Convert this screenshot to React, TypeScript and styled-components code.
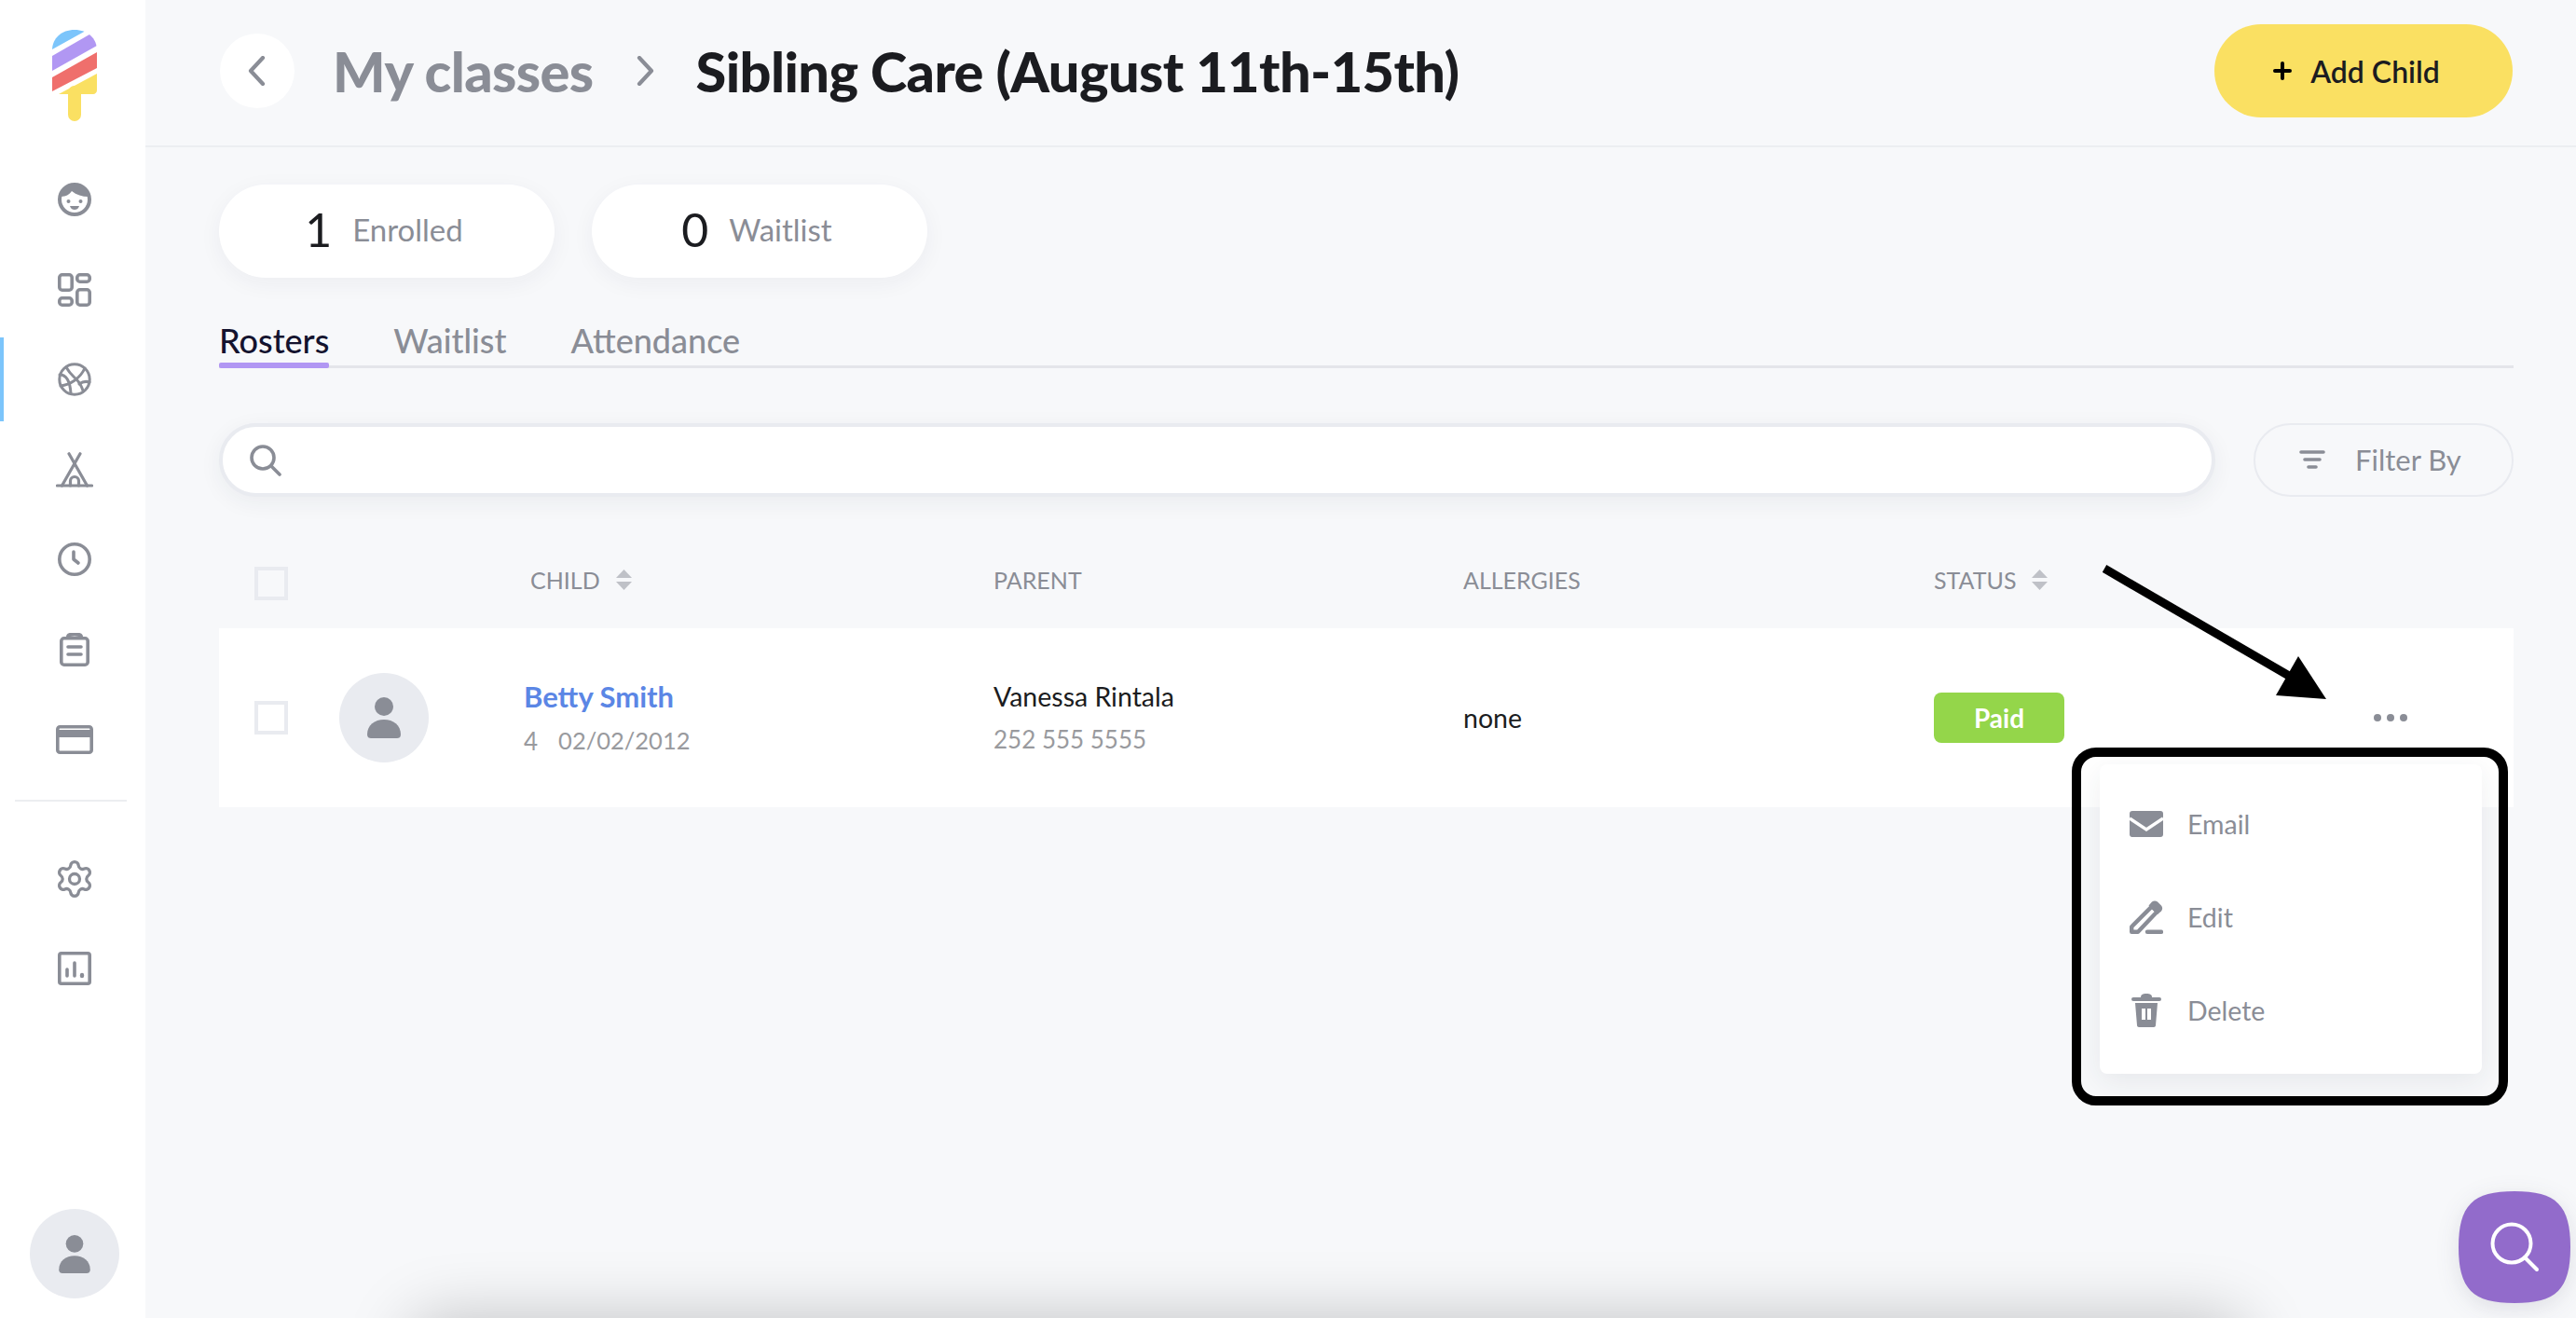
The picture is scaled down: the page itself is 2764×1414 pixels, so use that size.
import styled, { createGlobalStyle } from "styled-components";
import { Settings } from "lucide-react";

const GlobalStyle = createGlobalStyle`
  html, body {
    margin: 0;
    padding: 0;
    height: 100%;
    overflow: hidden;
    background: #f7f8fa;
    font-family: "Lato", "Noto Sans", sans-serif;
  }
`;

const grey = "#8a8d96";

const Page = styled.div`
  position: relative;
  display: flex;
  width: 2764px;
  height: 1414px;
  overflow: hidden;
  background: #f7f8fa;
`;

const Sidebar = styled.nav`
  width: 156px;
  flex-shrink: 0;
  display: flex;
  flex-direction: column;
  align-items: center;
  background: #fff;
  padding-top: 32px;
  box-sizing: border-box;
`;

const Logo = styled.svg`
  width: 48px;
  height: 98px;
  margin: 0 0 36px 4px;
`;

const NavItem = styled.div<{ $active?: boolean }>`
  position: relative;
  align-self: stretch;
  height: 96.5px;
  display: flex;
  align-items: center;
  justify-content: center;
  box-sizing: border-box;
  padding-left: 4px;
  color: ${grey};
  &::before {
    content: "";
    display: ${(p) => (p.$active ? "block" : "none")};
    position: absolute;
    left: 0;
    top: 3px;
    width: 4px;
    height: 90px;
    background: #7cc5fb;
  }
`;

const NavDivider = styled.div`
  width: 120px;
  height: 2px;
  background: #eceef1;
  margin: 16px 4px 35px 0;
  flex-shrink: 0;
`;

const UserBubble = styled.div`
  width: 96px;
  height: 96px;
  border-radius: 50%;
  background: #e9ebf0;
  display: flex;
  align-items: center;
  justify-content: center;
  margin: auto 0 21px 4px;
`;

const Main = styled.main`
  flex: 1;
  display: flex;
  flex-direction: column;
  min-width: 0;
`;

const Header = styled.header`
  height: 158px;
  box-sizing: border-box;
  display: flex;
  align-items: center;
  padding: 0 68px 4px 80px;
  border-bottom: 2px solid #eceef1;
`;

const BackButton = styled.div`
  width: 80px;
  height: 80px;
  border-radius: 50%;
  background: #fff;
  display: flex;
  align-items: center;
  justify-content: center;
  margin-right: 41px;
`;

const Crumb = styled.div`
  font-size: 59.5px;
  font-weight: 900;
  letter-spacing: -0.6px;
  color: ${grey};
`;

const CrumbArrow = styled.svg`
  width: 20px;
  height: 32px;
  margin: 0 45px;
`;

const Title = styled(Crumb)`
  color: #1b1c20;
`;

const AddButton = styled.button`
  margin-left: auto;
  width: 320px;
  height: 100px;
  border: none;
  border-radius: 50px;
  background: #fae062;
  display: flex;
  align-items: center;
  justify-content: center;
  gap: 20px;
  padding: 0 15px 0 0;
  font-family: inherit;
  font-size: 32px;
  font-weight: 600;
  color: #1b1c20;
`;

const Content = styled.div`
  padding: 40px 67px 0 79px;
  display: flex;
  flex-direction: column;
`;

const Pills = styled.div`
  display: flex;
  gap: 40px;
`;

const Pill = styled.div`
  width: 360px;
  height: 100px;
  padding: 0 6px 4px 0;
  box-sizing: border-box;
  border-radius: 50px;
  background: #fff;
  box-shadow: 0 6px 24px rgba(40, 45, 70, 0.05);
  display: flex;
  align-items: center;
  justify-content: center;
  gap: 22px;
  font-size: 33px;
  color: ${grey};
`;

const PillCount = styled.span`
  font-size: 50px;
  color: #1b1c20;
`;

const Tabs = styled.div`
  display: flex;
  gap: 69px;
  margin-top: 32px;
  border-bottom: 3px solid #e4e5ea;
  height: 62px;
`;

const Tab = styled.div<{ $active?: boolean }>`
  position: relative;
  font-size: 36px;
  font-weight: 500;
  line-height: 70px;
  color: ${(p) => (p.$active ? "#14132e" : grey)};
  &::after {
    content: "";
    display: ${(p) => (p.$active ? "block" : "none")};
    position: absolute;
    left: 0;
    right: 0;
    bottom: -3px;
    height: 6px;
    border-radius: 2px;
    background: #b197f3;
  }
`;

const SearchRow = styled.div`
  display: flex;
  gap: 41px;
  margin-top: 59px;
`;

const SearchBox = styled.div`
  flex: 1;
  height: 79px;
  box-sizing: border-box;
  border: 4px solid #e9ebf0;
  border-radius: 40px;
  background: #fff;
  box-shadow: 0 6px 24px rgba(40, 45, 70, 0.06);
  display: flex;
  align-items: center;
  padding-left: 28px;
`;

const FilterButton = styled.div`
  width: 279px;
  height: 79px;
  box-sizing: border-box;
  border: 2px solid #e9ebf0;
  border-radius: 40px;
  display: flex;
  align-items: center;
  padding: 0 0 2px 47px;
  gap: 32px;
  font-size: 31px;
  color: ${grey};
`;

const Table = styled.div`
  position: relative;
  margin-top: 45px;
`;

const columns = "91px 198px 504px 504px 505px 300px 1fr";

const HeadRow = styled.div`
  display: grid;
  grid-template-columns: ${columns};
  height: 96px;
  align-items: center;
  padding-left: 38px;
`;

const HeadCell = styled.div<{ $inset?: boolean }>`
  display: flex;
  align-items: center;
  gap: 17px;
  font-size: 25px;
  color: ${grey};
  padding: 0 0 9px ${(p) => (p.$inset ? 7 : 0)}px;
`;

const Checkbox = styled.div`
  width: 36px;
  height: 36px;
  box-sizing: border-box;
  border: 4px solid #e9ebf0;
  background: #fff;
`;

const HeadCheckbox = styled(Checkbox)`
  background: transparent;
`;

const Row = styled.div`
  display: grid;
  grid-template-columns: ${columns};
  height: 192px;
  align-items: center;
  padding-left: 38px;
  background: #fff;
`;

const Avatar = styled.div`
  width: 96px;
  height: 96px;
  border-radius: 50%;
  background: #e9ebf0;
  display: flex;
  align-items: center;
  justify-content: center;
`;

const Stack = styled.div`
  display: flex;
  flex-direction: column;
  gap: 13px;
  padding-bottom: 2px;
`;

const ChildName = styled.div`
  font-size: 31px;
  font-weight: 700;
  color: #5b86e5;
`;

const Muted = styled.div`
  font-size: 26px;
  color: #999a9e;
  display: flex;
  gap: 22px;
`;

const DateText = styled.span`
  font-size: 25.5px;
`;

const Plain = styled.div`
  font-size: 28.5px;
  color: #1b1c20;
`;

const Paid = styled.div`
  width: 140px;
  height: 54px;
  border-radius: 8px;
  background: #94d64a;
  color: #fff;
  font-size: 28px;
  font-weight: 700;
  display: flex;
  align-items: center;
  justify-content: center;
`;

const Dots = styled.div`
  display: flex;
  gap: 6px;
  justify-content: flex-end;
  padding-right: 114px;
`;

const Dot = styled.span`
  width: 8px;
  height: 8px;
  border-radius: 50%;
  background: ${grey};
`;

const ActionsMenu = styled.div`
  position: absolute;
  top: 242px;
  left: 2018px;
  width: 410px;
  height: 332px;
  box-sizing: border-box;
  padding: 14px 0;
  border-radius: 8px;
  background: #fff;
  box-shadow: 0 8px 30px rgba(40, 45, 70, 0.08);
  display: flex;
  flex-direction: column;
`;

const MenuItem = styled.div`
  height: 100px;
  display: flex;
  align-items: center;
  font-size: 28.5px;
  color: ${grey};
  padding-left: 32px;
  gap: 26px;
`;

const MenuIcon = styled.div`
  width: 36px;
  display: flex;
  justify-content: center;
`;

const Highlight = styled.div`
  position: absolute;
  top: 224px;
  left: 1988px;
  width: 468px;
  height: 384px;
  box-sizing: border-box;
  border: 10px solid #000;
  border-radius: 26px;
`;

const Arrow = styled.svg`
  position: absolute;
  top: 27px;
  left: 2021px;
  width: 242px;
  height: 148px;
`;

const HelpButton = styled.svg`
  position: absolute;
  left: 2638px;
  top: 1278px;
  width: 120px;
  height: 120px;
  filter: drop-shadow(0 6px 12px rgba(40, 45, 70, 0.12));
`;

const OffscreenBar = styled.div`
  position: absolute;
  top: 1424px;
  left: 450px;
  width: 1950px;
  height: 100px;
  border-radius: 20px;
  box-shadow: 0 0 70px 10px rgba(0, 0, 0, 0.22);
`;

const FaceIcon = () => (
  <svg width="36" height="36" viewBox="0 0 36 36">
    <circle cx="18" cy="18" r="16" fill="none" stroke="currentColor" strokeWidth="4" />
    <path d="M3 15C4 7 10 1 18 1s14 6 15 14c-7 0-13-2-18-6-2 3-6 6-12 6Z" fill="currentColor" />
    <circle cx="11.5" cy="20" r="2" fill="currentColor" />
    <circle cx="24.5" cy="20" r="2" fill="currentColor" />
    <path d="M13 25h10c-1 3-3 4-5 4s-4-1-5-4Z" fill="currentColor" />
  </svg>
);

const GridIcon = () => (
  <svg width="36" height="36" viewBox="0 0 36 36" fill="none" stroke="currentColor" strokeWidth="3.6">
    <rect x="1.8" y="1.8" width="13.4" height="16.4" rx="3" />
    <rect x="1.8" y="26.8" width="13.4" height="7.4" rx="3" />
    <rect x="20.8" y="1.8" width="13.4" height="7.4" rx="3" />
    <rect x="20.8" y="17.8" width="13.4" height="16.4" rx="3" />
  </svg>
);

const BallIcon = () => (
  <svg width="36" height="36" viewBox="0 0 36 36" fill="none" stroke="currentColor" strokeWidth="3" strokeLinecap="round">
    <circle cx="18" cy="18" r="16.2" />
    <path d="M3 25C13 24 24 17 29 6" />
    <path d="M9 5c4 7 7 9 11 13s6 9 7 12" />
    <path d="M2 13c6 0 11 5 12 20" />
    <path d="M34 21c-3-1-7-1-11 2" />
  </svg>
);

const TepeeIcon = () => (
  <svg width="40" height="38" viewBox="0 0 40 38" fill="none" stroke="currentColor" strokeWidth="3.2" strokeLinecap="round">
    <path d="M1.5 36h37" />
    <path d="M6.5 36 26 1.8" />
    <path d="M33.5 36 14 1.8" />
    <path d="M15.5 36v-5a4.5 4.5 0 0 1 9 0v5" />
  </svg>
);

const ClockIcon = () => (
  <svg width="36" height="36" viewBox="0 0 36 36" fill="none" stroke="currentColor" strokeWidth="3.6" strokeLinecap="round" strokeLinejoin="round">
    <circle cx="18" cy="18" r="16.2" />
    <path d="M17 10v8l5 4" />
  </svg>
);

const ClipboardIcon = () => (
  <svg width="32" height="36" viewBox="0 0 32 36" fill="none" stroke="currentColor" strokeWidth="3.6" strokeLinecap="round">
    <rect x="1.8" y="5.8" width="28.4" height="28.4" rx="3" />
    <path d="M9 4c0-2 2-2.4 7-2.4S23 2 23 4" strokeWidth="4" />
    <path d="M9 15h14M9 23h14" />
  </svg>
);

const CardIcon = () => (
  <svg width="40" height="31" viewBox="0 0 40 31" fill="none" stroke="currentColor" strokeWidth="3.6">
    <rect x="1.8" y="1.8" width="36.4" height="27.4" rx="2.5" />
    <rect x="1" y="5" width="38" height="8" fill="currentColor" stroke="none" />
  </svg>
);

const ChartIcon = () => (
  <svg width="36" height="36" viewBox="0 0 36 36" fill="none" stroke="currentColor" strokeWidth="3.6" strokeLinecap="round">
    <rect x="1.8" y="1.8" width="32.4" height="32.4" rx="2" />
    <path d="M10 19v7M18 12v14" />
    <path d="M26 25v1" strokeWidth="4.4" />
  </svg>
);

const PersonIcon = ({ width, height }: { width: number; height: number }) => (
  <svg width={width} height={height} viewBox="0 0 36 44" fill={grey}>
    <ellipse cx="18" cy="10" rx="10" ry="10" />
    <path d="M0 40c0-10 8-16 18-16s18 6 18 16c0 3-2 4-4 4H4c-2 0-4-1-4-4Z" />
  </svg>
);

const SortIcon = () => (
  <svg width="17" height="22" viewBox="0 0 17 22" fill="#bfc1c7">
    <path d="M8.5 0 17 9H0Z" />
    <path d="M8.5 22 0 13h17Z" />
  </svg>
);

const navTop = [FaceIcon, GridIcon, BallIcon, TepeeIcon, ClockIcon, ClipboardIcon, CardIcon];

export default function App() {
  return (
    <>
      <GlobalStyle />
      <Page>
        <Sidebar>
          <Logo viewBox="0 0 48 98">
            <defs>
              <clipPath id="pop">
                <path d="M0 22C0 9 10 0 24 0s24 9 24 22v43c0 2-2 4-4 4H0Z" />
              </clipPath>
            </defs>
            <rect x="17" y="60" width="14" height="38" rx="7" fill="#fae062" />
            <g clipPath="url(#pop)">
              <polygon points="0,21 36,1 36,0 0,0" fill="#7cc5fb" />
              <polygon points="0,28 40,5 48,1 48,17 0,44" fill="#b197f3" />
              <polygon points="0,51 48,24 48,41 0,66" fill="#ef6f6c" />
              <polygon points="7,69 48,47 48,69" fill="#fae062" />
            </g>
          </Logo>
          {navTop.map((Icon, i) => (
            <NavItem key={i} $active={i === 2}>
              <Icon />
            </NavItem>
          ))}
          <NavDivider />
          <NavItem>
            <Settings size={44} strokeWidth={1.8} />
          </NavItem>
          <NavItem>
            <ChartIcon />
          </NavItem>
          <UserBubble>
            <PersonIcon width={34} height={41} />
          </UserBubble>
        </Sidebar>

        <Main>
          <Header>
            <BackButton>
              <svg width="20" height="32" viewBox="0 0 20 32" fill="none" stroke={grey} strokeWidth="4.2" strokeLinecap="round" strokeLinejoin="round">
                <path d="M16 2 3 16l13 14" />
              </svg>
            </BackButton>
            <Crumb>My classes</Crumb>
            <CrumbArrow viewBox="0 0 20 32" fill="none" stroke={grey} strokeWidth="4.2" strokeLinecap="round" strokeLinejoin="round">
              <path d="M4 2l13 14L4 30" />
            </CrumbArrow>
            <Title>Sibling Care (August 11th-15th)</Title>
            <AddButton>
              <svg width="20" height="20" viewBox="0 0 20 20" stroke="#000" strokeWidth="4" strokeLinecap="round">
                <path d="M10 2v16M2 10h16" />
              </svg>
              Add Child
            </AddButton>
          </Header>

          <Content>
            <Pills>
              <Pill>
                <PillCount>1</PillCount>Enrolled
              </Pill>
              <Pill>
                <PillCount>0</PillCount>Waitlist
              </Pill>
            </Pills>

            <Tabs>
              <Tab $active>Rosters</Tab>
              <Tab>Waitlist</Tab>
              <Tab>Attendance</Tab>
            </Tabs>

            <SearchRow>
              <SearchBox>
                <svg width="36" height="36" viewBox="0 0 36 36" fill="none" stroke={grey} strokeWidth="3.6" strokeLinecap="round">
                  <circle cx="15" cy="15" r="12" />
                  <path d="m24 24 9 9" />
                </svg>
              </SearchBox>
              <FilterButton>
                <svg width="28" height="20" viewBox="0 0 28 20" stroke={grey} strokeWidth="3.6" strokeLinecap="round">
                  <path d="M2 2h24M6 10h16M10 18h8" />
                </svg>
                Filter By
              </FilterButton>
            </SearchRow>

            <Table>
              <HeadRow>
                <HeadCheckbox />
                <span />
                <HeadCell $inset>
                  CHILD <SortIcon />
                </HeadCell>
                <HeadCell>PARENT</HeadCell>
                <HeadCell>ALLERGIES</HeadCell>
                <HeadCell>
                  STATUS <SortIcon />
                </HeadCell>
              </HeadRow>
              <Row>
                <Checkbox />
                <Avatar>
                  <PersonIcon width={36} height={44} />
                </Avatar>
                <Stack>
                  <ChildName>Betty Smith</ChildName>
                  <Muted>
                    <span>4</span>
                    <DateText>02/02/2012</DateText>
                  </Muted>
                </Stack>
                <Stack>
                  <Plain>Vanessa Rintala</Plain>
                  <Muted>252 555 5555</Muted>
                </Stack>
                <Plain>none</Plain>
                <div>
                  <Paid>Paid</Paid>
                </div>
                <Dots>
                  <Dot />
                  <Dot />
                  <Dot />
                </Dots>
              </Row>

              <ActionsMenu>
                <MenuItem>
                  <MenuIcon>
                    <svg width="36" height="28" viewBox="0 0 36 28">
                      <rect width="36" height="28" rx="3" fill={grey} />
                      <path d="M0 8l18 12L36 8" fill="none" stroke="#fff" strokeWidth="3.4" />
                    </svg>
                  </MenuIcon>
                  Email
                </MenuItem>
                <MenuItem>
                  <MenuIcon>
                    <svg width="36" height="36" viewBox="0 0 36 36" fill="none" stroke={grey} strokeWidth="4.4" strokeLinecap="round" strokeLinejoin="round">
                      <path d="M2.2 33.8v-5.6L24 6.4l5.6 5.6L9 33.8Z" />
                      <path d="M19 33.8h15" />
                      <path d="M24 1.5c2-1.5 4-1.5 6 0l4 4c1.5 2 1.5 4 0 6l-4 3.5-9.500-9.500Z" fill={grey} stroke="none" />
                    </svg>
                  </MenuIcon>
                  Edit
                </MenuItem>
                <MenuItem>
                  <MenuIcon>
                    <svg width="32" height="36" viewBox="0 0 32 36" fill={grey}>
                      <rect x="0" y="4" width="32" height="4" rx="2" />
                      <path d="M10 4c0-3 2-4 6-4s6 1 6 4Z" />
                      <path fillRule="evenodd" d="M4 10h24l-2 24c0 1-1 2-2 2H8c-1 0-2-1-2-2Zm7 6v12h4V16Zm6 0v12h4V16Z" />
                    </svg>
                  </MenuIcon>
                  Delete
                </MenuItem>
              </ActionsMenu>
              <Highlight />
              <Arrow viewBox="0 0 242 148">
                <path d="M2 5 200 120" stroke="#000" strokeWidth="9" />
                <polygon points="210,99 186,141 240,145" fill="#000" />
              </Arrow>
            </Table>
          </Content>
        </Main>

        <OffscreenBar />
        <HelpButton viewBox="0 0 120 120">
          <path d="M60 0C105 0 120 15 120 60s-15 60-60 60S0 105 0 60 15 0 60 0Z" fill="#926bcb" />
          <circle cx="57" cy="56" r="20.5" fill="none" stroke="#fff" strokeWidth="4" />
          <path d="M71 71 84 84" stroke="#fff" strokeWidth="4" strokeLinecap="round" />
        </HelpButton>
      </Page>
    </>
  );
}
